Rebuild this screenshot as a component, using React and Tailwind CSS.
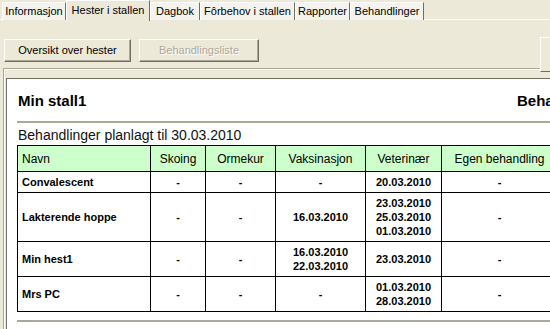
const tabs = [
  { label: "Informasjon", w: "w-[64px]" },
  { label: "Hester i stallen", w: "w-[84px]", active: true },
  { label: "Dagbok", w: "w-[50px]" },
  { label: "Fôrbehov i stallen", w: "w-[95px]" },
  { label: "Rapporter", w: "w-[55px]" },
  { label: "Behandlinger", w: "w-[74px]" },
]

const rows = [
  { name: "Convalescent", h: "h-[21px]", skoing: ["-"], ormekur: ["-"], vaks: ["-"], vet: ["20.03.2010"], egen: ["-"] },
  { name: "Lakterende hoppe", h: "h-[49px]", skoing: ["-"], ormekur: ["-"], vaks: ["16.03.2010"], vet: ["23.03.2010", "25.03.2010", "01.03.2010"], egen: ["-"] },
  { name: "Min hest1", h: "h-[35px]", skoing: ["-"], ormekur: ["-"], vaks: ["16.03.2010", "22.03.2010"], vet: ["23.03.2010"], egen: ["-"] },
  { name: "Mrs PC", h: "h-[35px]", skoing: ["-"], ormekur: ["-"], vaks: ["-"], vet: ["01.03.2010", "28.03.2010"], egen: ["-"] },
]

const Lines = ({ items }) => (
  <>
    {items.map((t, i) => (
      <div key={i}>{t}</div>
    ))}
  </>
)

const Tab = ({ label, w, active }) =>
  active ? (
    <div className={`${w} h-[21px] relative z-10 flex items-center justify-center bg-[#ECE9D8] border-t border-l border-white border-r border-r-[#716F64]`}>
      <span className="pb-[1px]">{label}</span>
    </div>
  ) : (
    <div className={`${w} h-[18px] mt-[2px] flex items-center justify-center bg-[#F4F3EE] border-t border-l border-white border-r border-r-[#716F64]`}>
      <span>{label}</span>
    </div>
  )

export default function App() {
  return (
    <div className="w-[550px] h-[329px] overflow-hidden bg-[#ECE9D8] text-[11px] text-black" style={{ fontFamily: '"Liberation Sans", Arial, sans-serif' }}>
      {/* tab strip */}
      <div className="flex h-[20px] pl-[2px] border-b border-white">
        {tabs.map((t) => (
          <Tab key={t.label} {...t} />
        ))}
      </div>

      {/* toolbar */}
      <div className="flex items-start pl-[4px] pt-[19px] h-[48px] relative">
        <button className="w-[127px] h-[23px] bg-[#ECE9D8] border border-t-white border-l-white border-r-[#716F64] border-b-[#716F64] shadow-[inset_-1px_-1px_0_#ACA899]">
          Oversikt over hester
        </button>
        <button className="ml-[8px] w-[120px] h-[23px] bg-[#ECE9D8] text-[#ACA899] border border-t-white border-l-white border-r-[#716F64] border-b-[#716F64] shadow-[inset_-1px_-1px_0_#ACA899] [text-shadow:1px_1px_0_#fff]">
          Behandlingsliste
        </button>
        <div className="absolute left-[540px] top-[17px] w-[40px] h-[35px] border border-t-white border-l-white border-r-[#716F64] border-b-[#716F64] bg-[#ECE9D8]" />
      </div>

      {/* frame */}
      <div className="ml-[3px] w-[720px] border-t border-l border-[#ACA899]">
        <div className="border-t border-l border-white pt-[8px] pl-[1px]">
          <div className="border-t border-l border-[#716F64] bg-white h-[260px]">
            <div className="pl-[11px] pt-[13px]">
              <div className="flex text-[15px] leading-[18px] font-bold">
                <div className="w-[499px] shrink-0">Min stall1</div>
                <div className="shrink-0">Behandlingsliste</div>
              </div>
              <div className="mt-[11px] -ml-[1px] h-[2px] bg-[#ACA899]" />
              <div className="mt-[4px] text-[14px] leading-[16px] text-[#111]">Behandlinger planlagt til 30.03.2010</div>
              <table className="mt-[2px] -ml-[1px] border-collapse border border-black">
                <thead>
                  <tr className="bg-[#CCFFCC] h-[26px] text-[12px]">
                    <th className="w-[133px] border border-black text-left pl-[4px] font-normal">Navn</th>
                    <th className="w-[55px] border border-black font-normal">Skoing</th>
                    <th className="w-[70px] border border-black font-normal">Ormekur</th>
                    <th className="w-[90px] border border-black font-normal">Vaksinasjon</th>
                    <th className="w-[76px] border border-black font-normal">Veterinær</th>
                    <th className="w-[116px] border border-black font-normal">Egen behandling</th>
                  </tr>
                </thead>
                <tbody className="text-[11px] leading-[14px] font-bold">
                  {rows.map((r) => (
                    <tr key={r.name} className={r.h}>
                      <td className="border border-black text-left pl-[4px] py-[3px]">{r.name}</td>
                      <td className="border border-black text-center py-[3px]"><Lines items={r.skoing} /></td>
                      <td className="border border-black text-center py-[3px]"><Lines items={r.ormekur} /></td>
                      <td className="border border-black text-center py-[3px]"><Lines items={r.vaks} /></td>
                      <td className="border border-black text-center py-[3px]"><Lines items={r.vet} /></td>
                      <td className="border border-black text-center py-[3px]"><Lines items={r.egen} /></td>
                    </tr>
                  ))}
                </tbody>
              </table>
              <div className="mt-[8px] -ml-[1px] h-[2px] bg-[#ACA899]" />
            </div>
          </div>
        </div>
      </div>
    </div>
  )
}
